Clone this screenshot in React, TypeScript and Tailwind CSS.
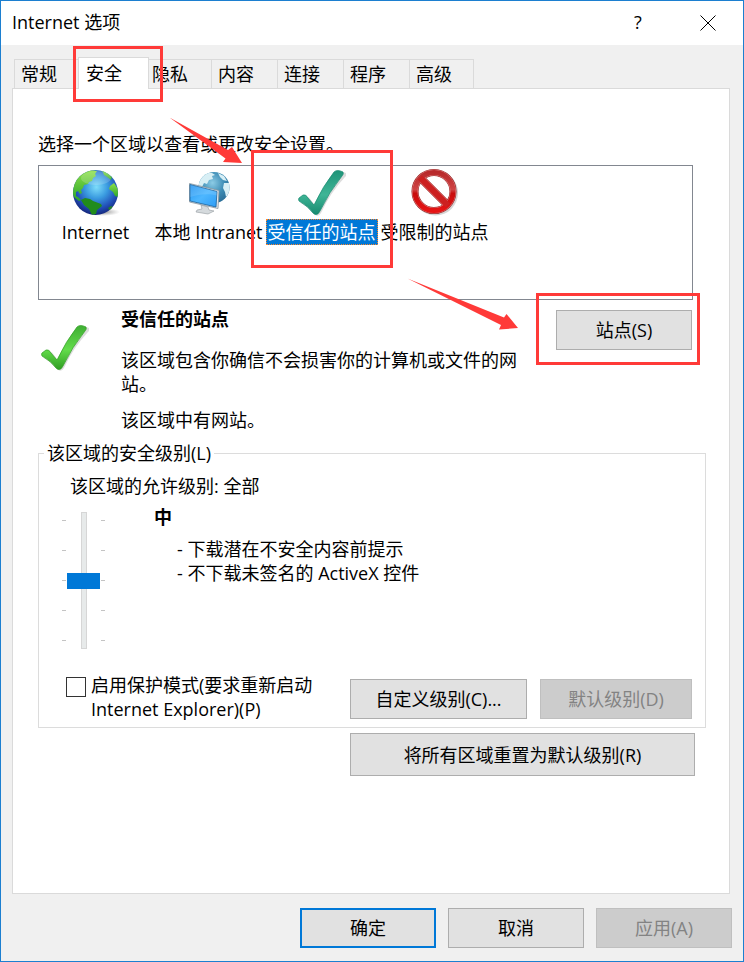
import { useState } from "react";
import type { ReactNode } from "react";

type ZoneId = "internet" | "intranet" | "trusted" | "restricted";

interface Zone {
  id: ZoneId;
  label: string;
  icon: ReactNode;
}

const tabs = ["常规", "安全", "隐私", "内容", "连接", "程序", "高级"];

const zones: Zone[] = [
  { id: "internet", label: "Internet", icon: <GlobeIcon /> },
  { id: "intranet", label: "本地 Intranet", icon: <IntranetIcon /> },
  {
    id: "trusted",
    label: "受信任的站点",
    icon: <CheckIcon id="teal" from="#1f9479" mid="#3fb596" to="#178a70" />,
  },
  { id: "restricted", label: "受限制的站点", icon: <RestrictedIcon /> },
];

export default function App() {
  const [activeTab, setActiveTab] = useState("安全");
  const [zone, setZone] = useState<ZoneId>("trusted");
  const [level, setLevel] = useState(2);
  const [protectedMode, setProtectedMode] = useState(false);

  return (
    <div className="relative flex min-h-screen flex-col border border-[#1c7fd0] bg-[#f0f0f0] font-['Open_Sans','Noto_Sans_CJK_SC',sans-serif] text-[18px] leading-6 text-black">
      <header className="flex h-11 items-center justify-between bg-white pl-[11px]">
        <h1 className="pb-0.5">Internet 选项</h1>
        <div className="flex h-full">
          <button type="button" aria-label="帮助" className="w-[70px] pb-0.5">
            ?
          </button>
          <button
            type="button"
            aria-label="关闭"
            className="flex w-[70px] items-center justify-center"
          >
            <svg width="16" height="16" viewBox="0 0 16 16" stroke="#000">
              <path d="M.5.5l15 15M15.5.5l-15 15" />
            </svg>
          </button>
        </div>
      </header>

      <main className="flex flex-1 flex-col pt-3 pr-[13px] pl-[11px]">
        <div role="tablist" className="flex items-end pl-0.5">
          {tabs.map((tab) => (
            <button
              key={tab}
              type="button"
              role="tab"
              aria-selected={tab === activeTab}
              onClick={() => setActiveTab(tab)}
              className={
                tab === activeTab
                  ? "relative z-10 -mr-1 -mb-px -ml-0.5 h-8 w-[71px] border border-b-0 border-[#dadada] bg-white pb-0.5 pl-[7px] text-left"
                  : "h-[29px] w-[66px] border border-r-0 border-b-0 border-[#dadada] pl-[6px] text-left last:w-[65px] last:border-r"
              }
            >
              {tab}
            </button>
          ))}
        </div>

        <section className="flex-1 border border-[#dadada] bg-white pt-[43px] pr-[23px] pl-[25px]">
          <p id="zone-label">选择一个区域以查看或更改安全设置。</p>
          <div
            role="listbox"
            aria-labelledby="zone-label"
            className="mt-[9px] mr-[13px] flex h-[135px] border border-[#828790]"
          >
            {zones.map((item) => (
              <button
                key={item.id}
                type="button"
                role="option"
                aria-selected={item.id === zone}
                onClick={() => setZone(item.id)}
                className="flex w-[113px] flex-col items-center pt-[3px] whitespace-nowrap"
              >
                {item.icon}
                <span
                  className={
                    item.id === zone
                      ? "mt-0.5 border border-dotted border-[#ff8728] bg-[#0078d7] px-px text-white"
                      : "mt-0.5 border border-transparent px-px"
                  }
                >
                  {item.label}
                </span>
              </button>
            ))}
          </div>

          <div className="flex items-start pt-[7px] pr-[14px]">
            <div className="w-[83px] shrink-0 pt-[17px] pl-[3px]">
              <CheckIcon id="green" from="#3fae33" mid="#63dc4b" to="#2f9d22" />
            </div>
            <div className="w-[400px] shrink-0">
              <h2 className="font-bold">受信任的站点</h2>
              <p className="mt-[17px]">
                该区域包含你确信不会损害你的计算机或文件的网站。
              </p>
              <p className="mt-3">该区域中有网站。</p>
            </div>
            <PushButton className="mt-[3px] ml-auto w-[136px]">站点(S)</PushButton>
          </div>

          <fieldset className="mt-[9px] h-[287px] border border-[#dcdcdc] pl-[27px]">
            <legend className="-ml-[22px] px-[3px]">该区域的安全级别(L)</legend>
            <p className="mt-[9px] pl-1">该区域的允许级别: 全部</p>
            <div className="flex">
              <LevelSlider value={level} onChange={setLevel} />
              <div className="pt-[7px] pl-[49px]">
                <h3 className="font-bold">中</h3>
                <ul className="mt-2 pl-[23px]">
                  <li>- 下载潜在不安全内容前提示</li>
                  <li>- 不下载未签名的 ActiveX 控件</li>
                </ul>
              </div>
            </div>
            <div className="mt-6 flex items-start pr-[13px]">
              <label className="flex w-[283px] items-start gap-[5px]">
                <input
                  type="checkbox"
                  checked={protectedMode}
                  onChange={(e) => setProtectedMode(e.target.checked)}
                  className="mt-1 size-5 shrink-0 appearance-none border border-[#333] bg-white checked:bg-[#0078d7]"
                />
                <span className="w-[240px]">
                  启用保护模式(要求重新启动 Internet Explorer)(P)
                </span>
              </label>
              <PushButton className="mt-1.5 ml-auto w-[177px]">自定义级别(C)...</PushButton>
              <PushButton className="mt-1.5 ml-[13px] w-[152px]" disabled>
                默认级别(D)
              </PushButton>
            </div>
          </fieldset>

          <div className="mt-[5px] flex justify-end pr-[11px]">
            <PushButton className="h-[43px] w-[345px]">
              将所有区域重置为默认级别(R)
            </PushButton>
          </div>
        </section>
      </main>

      <footer className="flex justify-end gap-3 px-[11px] pt-[14px] pb-[13px]">
        <button
          type="submit"
          className="h-10 w-[136px] border-2 border-[#0078d7] bg-[#e1e1e1]"
        >
          确定
        </button>
        <PushButton className="w-[136px]">取消</PushButton>
        <PushButton className="w-[136px]" disabled>
          应用(A)
        </PushButton>
      </footer>

      <Annotations />
    </div>
  );
}

function PushButton({
  children,
  className = "",
  disabled = false,
}: {
  children: ReactNode;
  className?: string;
  disabled?: boolean;
}) {
  return (
    <button
      type="button"
      disabled={disabled}
      className={[
        "min-h-10 shrink-0 border",
        disabled
          ? "border-[#bfbfbf] bg-[#cccccc] text-[#838383]"
          : "border-[#adadad] bg-[#e1e1e1]",
        className,
      ].join(" ")}
    >
      {children}
    </button>
  );
}

function LevelSlider({
  value,
  onChange,
}: {
  value: number;
  onChange: (value: number) => void;
}) {
  return (
    <div className="mt-[14px] -ml-1 flex h-[137px]">
      <Ticks />
      <input
        type="range"
        aria-label="该区域的安全级别"
        min={0}
        max={4}
        value={value}
        onChange={(e) => onChange(Number(e.target.value))}
        className="h-[137px] w-[35px] appearance-none bg-transparent [direction:rtl] [writing-mode:vertical-lr] [&::-webkit-slider-runnable-track]:mx-auto [&::-webkit-slider-runnable-track]:h-full [&::-webkit-slider-runnable-track]:w-[6px] [&::-webkit-slider-runnable-track]:border [&::-webkit-slider-runnable-track]:border-[#d6d6d6] [&::-webkit-slider-runnable-track]:bg-[#e7eaea] [&::-webkit-slider-thumb]:-ml-[15px] [&::-webkit-slider-thumb]:h-4 [&::-webkit-slider-thumb]:w-[33px] [&::-webkit-slider-thumb]:appearance-none [&::-webkit-slider-thumb]:bg-[#0078d7]"
      />
      <Ticks />
    </div>
  );
}

function Ticks() {
  return (
    <div className="flex flex-col justify-between py-2">
      {[0, 1, 2, 3, 4].map((tick) => (
        <span key={tick} className="h-px w-1 bg-[#c4c4c4]" />
      ))}
    </div>
  );
}

function GlobeIcon() {
  return (
    <svg width="48" height="48" viewBox="0 0 48 48">
      <defs>
        <radialGradient id="sea" cx="52%" cy="38%" r="62%">
          <stop offset="0" stopColor="#7ddcfa" />
          <stop offset=".4" stopColor="#3a9be0" />
          <stop offset=".75" stopColor="#2250b8" />
          <stop offset="1" stopColor="#15267c" />
        </radialGradient>
        <linearGradient id="land" x1="0" y1="0" x2="0" y2="1">
          <stop offset="0" stopColor="#8ee04a" />
          <stop offset="1" stopColor="#2aa52a" />
        </linearGradient>
        <radialGradient id="globeShadow">
          <stop offset="0" stopColor="#555" stopOpacity=".7" />
          <stop offset="1" stopColor="#888" stopOpacity="0" />
        </radialGradient>
        <clipPath id="globeClip">
          <circle cx="23.5" cy="23.5" r="22.5" />
        </clipPath>
      </defs>
      <ellipse cx="30" cy="43" rx="18" ry="4" fill="url(#globeShadow)" />
      <circle cx="23.5" cy="23.5" r="22.5" fill="url(#sea)" />
      <g clipPath="url(#globeClip)" fill="url(#land)">
        <path d="M1 22C1 10 8 4 19 1l6 1-2 3 1 2-3 2-1 3-3 1-1 2-4 1-1 3-2 2 1 3-2 1-2-3-2 1 0 4 2 1 3 3-2 1-4-3-3-4z" />
        <path d="M28 1l6 1 6 6-1 3-4-3-3-2-1-3z" />
        <path d="M38 17l4-3 4 6v8l-3-1-2-4-4-3z" />
        <path d="M9 31l4-2 5 1 3 2 8 3 1 2-5 4-1 4-4 1-3-6-5-4z" fill="#218c1c" />
        <path d="M36 39l3-2 2 1-3 4z" fill="#247f2c" />
      </g>
      <ellipse cx="24" cy="9" rx="15" ry="7" fill="#fff" opacity=".18" />
    </svg>
  );
}

function IntranetIcon() {
  return (
    <svg width="48" height="48" viewBox="0 0 48 48">
      <defs>
        <radialGradient id="paleSea" cx="45%" cy="35%" r="65%">
          <stop offset="0" stopColor="#8ccbe5" />
          <stop offset=".6" stopColor="#3b8bb4" />
          <stop offset="1" stopColor="#2a6f99" />
        </radialGradient>
        <linearGradient id="screen" x1="0" y1="0" x2="1" y2="1">
          <stop offset="0" stopColor="#2594f0" />
          <stop offset=".5" stopColor="#4db7ff" />
          <stop offset="1" stopColor="#2e9cf5" />
        </linearGradient>
        <clipPath id="paleClip">
          <circle cx="29" cy="18.5" r="15.5" />
        </clipPath>
      </defs>
      <circle cx="29" cy="18.5" r="15.5" fill="url(#paleSea)" />
      <g clipPath="url(#paleClip)" fill="#d8eff5">
        <path d="M12 16c1-8 7-13 15-12l3 2-3 1 1 3-4 1-2 4-3-1-2 4z" />
        <path d="M33 4l6 3 3 5-4-1-3-3z" />
        <path d="M39 14l6 0v9l-4 5-1-5-2-4z" />
      </g>
      <path
        d="M16 36l7 2 1 3 5 1-6 3-12-2 1-2 5-1z"
        fill="#d5dadd"
        stroke="#92999e"
        strokeWidth=".6"
      />
      <path d="M4.5 14.5l29.5 7-1 18L4.500 33z" fill="#e5eaee" stroke="#87949e" strokeWidth=".8" />
      <path d="M5 15.5l27 7-1 15.5-26-6z" fill="url(#screen)" stroke="#155f9b" strokeWidth=".8" />
      <path d="M5 15.5l27 7v4C21 24 13 26 5 28z" fill="#fff" opacity=".12" />
    </svg>
  );
}

function CheckIcon({
  id,
  from,
  mid,
  to,
}: {
  id: string;
  from: string;
  mid: string;
  to: string;
}) {
  return (
    <svg width="48" height="48" viewBox="0 0 48 48">
      <defs>
        <linearGradient id={id} x1="0" y1="0" x2="0" y2="1">
          <stop offset="0" stopColor={from} />
          <stop offset=".55" stopColor={mid} />
          <stop offset="1" stopColor={to} />
        </linearGradient>
      </defs>
      <path
        d="M3 30l4-3q3-1 5 3l5 7q9-19 21-34 3-3 9 0 1 2-1 4Q31 23 22 43q-3 5-7 1Q10 38 2 33q-1-2 1-3z"
        fill="#777"
        opacity=".25"
        transform="translate(1 1)"
      />
      <path
        d="M1 29l4-3q3-1 5 3l6 7Q25 17 36 3q3-3 9 0 1 2-1 4Q31 23 22 42q-3 6-7 2Q10 37 1 32q-1-2 0-3z"
        fill={`url(#${id})`}
        stroke={to}
        strokeWidth=".7"
      />
    </svg>
  );
}

function RestrictedIcon() {
  return (
    <svg width="48" height="48" viewBox="0 0 48 48">
      <defs>
        <linearGradient id="ban" x1="0" y1="0" x2="0" y2="1">
          <stop offset="0" stopColor="#b8292b" />
          <stop offset=".45" stopColor="#cf4444" />
          <stop offset=".55" stopColor="#c80c0c" />
          <stop offset="1" stopColor="#e61414" />
        </linearGradient>
      </defs>
      <circle cx="24.5" cy="24" r="22.5" fill="#888" opacity=".35" />
      <circle cx="23" cy="22.5" r="19" fill="#fff" stroke="#941616" strokeWidth="7" />
      <path d="M10 9.5l26 26" stroke="#941616" strokeWidth="8" />
      <circle cx="23" cy="22.5" r="19" fill="none" stroke="#e08080" strokeWidth="6" />
      <path d="M10 9.5l26 26" stroke="#d86060" strokeWidth="7" />
      <circle cx="23" cy="22.5" r="19" fill="none" stroke="url(#ban)" strokeWidth="5" />
      <path d="M9 8.5l28 28" stroke="#cc2020" strokeWidth="6" />
    </svg>
  );
}

// Red frames and arrows pointing out the steps
function Annotations() {
  return (
    <svg
      aria-hidden
      width="742"
      height="400"
      viewBox="1 1 742 400"
      className="pointer-events-none absolute top-0 left-0 z-20"
    >
      <g fill="none" stroke="#ff3a38" strokeWidth="3">
        <rect x="74.5" y="47.5" width="87" height="53" />
        <rect x="252.5" y="151.5" width="139" height="115" />
        <rect x="537.5" y="294.5" width="161" height="69" />
      </g>
      <g fill="#ff3a38">
        <path d="M169.5 117.5L228 150l4-3 10 16-19-1 2.5-3.5z" />
        <path d="M407.5 278.5L504 317.5l2.5-3.5L518 328l-19 1.5 2-4.5z" />
      </g>
    </svg>
  );
}
